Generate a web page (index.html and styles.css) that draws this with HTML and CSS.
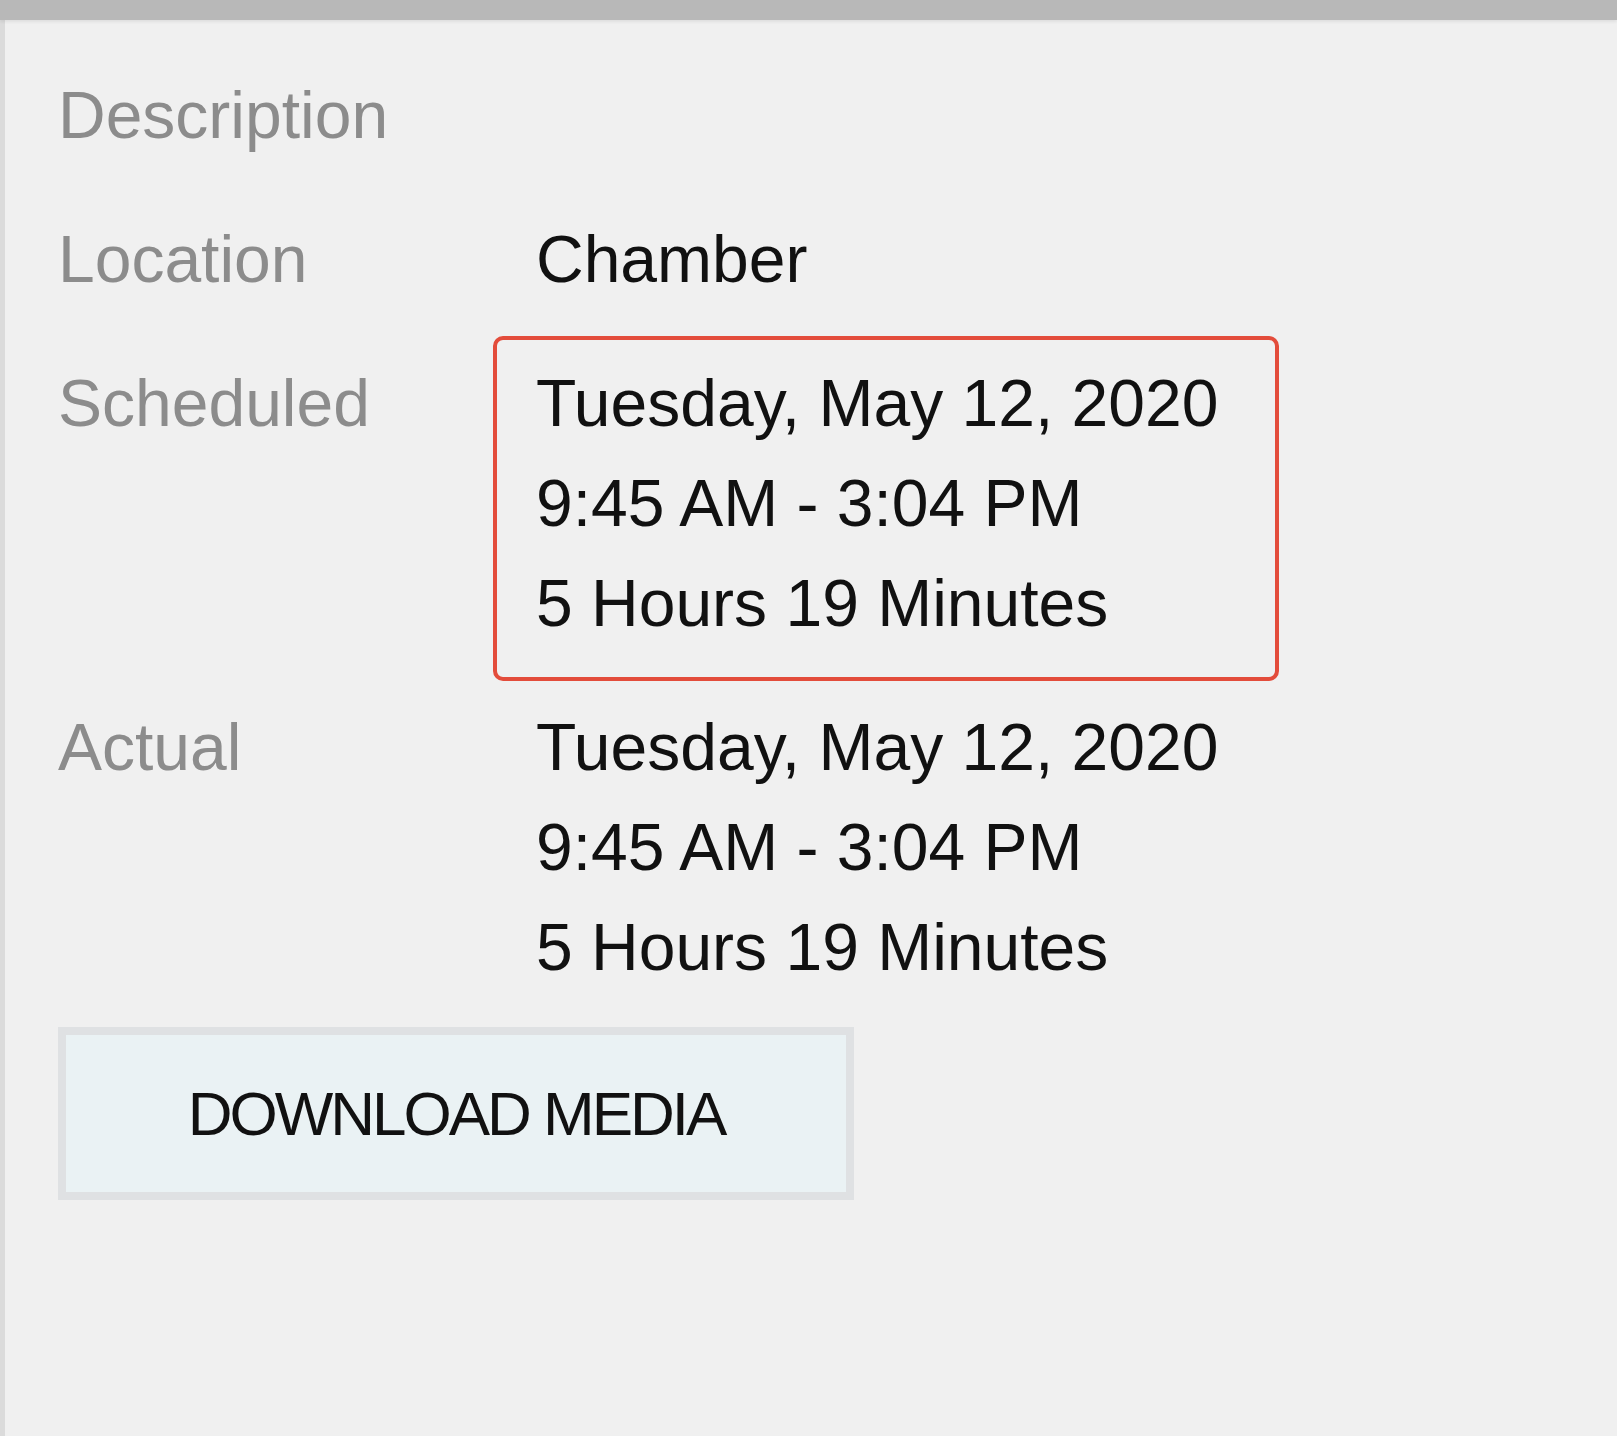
FILE: index.html
```html
<!DOCTYPE html>
<html lang="en">
<head>
<meta charset="utf-8">
<title>Event details</title>
<link rel="stylesheet" href="styles.css">
</head>
<body>
<div class="topbar"></div>
<main class="panel">
  <div class="details">
    <div class="label">Description</div>
    <div class="value"></div>

    <div class="label">Location</div>
    <div class="value">Chamber</div>

    <div class="label">Scheduled</div>
    <div class="value highlighted">
      <div class="line">Tuesday, May 12, 2020</div>
      <div class="line">9:45 AM - 3:04 PM</div>
      <div class="line">5 Hours 19 Minutes</div>
    </div>

    <div class="label">Actual</div>
    <div class="value">
      <div class="line">Tuesday, May 12, 2020</div>
      <div class="line">9:45 AM - 3:04 PM</div>
      <div class="line">5 Hours 19 Minutes</div>
    </div>
  </div>
  <button class="download">DOWNLOAD MEDIA</button>
</main>
</body>
</html>
```

FILE: styles.css
```css
html, body {
  margin: 0;
  padding: 0;
}

body {
  background: #f0f0f0;
  font-family: "Liberation Sans", Arial, sans-serif;
  font-size: 66px;
  line-height: 100px;
  color: #111111;
  overflow: hidden;
}

.topbar {
  height: 20px;
  background: #b8b8b8;
  box-shadow: 0 2px 3px rgba(0, 0, 0, 0.07);
  position: relative;
  z-index: 1;
}

.panel {
  border-left: 5px solid #dbdbdb;
  min-height: 1416px;
  box-sizing: border-box;
  padding: 45px 0 0 53px;
}

.details {
  display: grid;
  grid-template-columns: 478px 1fr;
  row-gap: 44px;
}

.label {
  color: #8c8c8c;
  height: 100px;
}

.value {
  color: #111111;
}

.highlighted {
  position: relative;
}

.highlighted::after {
  content: "";
  position: absolute;
  left: -43px;
  top: -17px;
  width: 786px;
  height: 345px;
  box-sizing: border-box;
  border: 4px solid #e34c3b;
  border-radius: 10px;
  pointer-events: none;
}

.download {
  display: block;
  margin-top: 30px;
  width: 796px;
  height: 173px;
  box-sizing: border-box;
  border: 8px solid #dfe1e3;
  background: #eaf2f4;
  font-family: inherit;
  font-size: 62px;
  line-height: 1;
  letter-spacing: -3px;
  color: #111111;
  padding: 0;
  text-align: center;
}
```
